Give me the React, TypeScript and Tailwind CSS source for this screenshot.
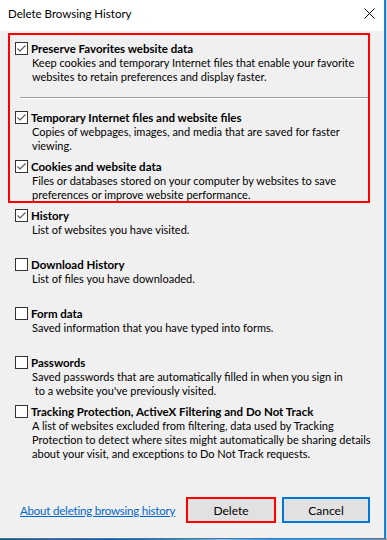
import React from "react";

const font = "font-['Lato','Liberation_Sans',sans-serif]";

function Box({ checked }: { checked: boolean }) {
  return (
    <div className="w-[13px] h-[13px] border border-[#333333] bg-white shrink-0 mt-[1px]">
      {checked && (
        <svg width="11" height="11" viewBox="0 0 11 11" className="block">
          <polyline
            points="1.5,5.5 4,8 9.5,2.5"
            fill="none"
            stroke="#555555"
            strokeWidth="1.1"
          />
        </svg>
      )}
    </div>
  );
}

function Item({
  checked,
  title,
  lines,
  className = "",
}: {
  checked: boolean;
  title: string;
  lines: string[];
  className?: string;
}) {
  return (
    <div className={`flex ${className}`}>
      <Box checked={checked} />
      <div className="ml-[3px] flex flex-col">
        <div className="font-bold leading-[15px] whitespace-nowrap text-[11.5px]">{title}</div>
        <div className="pl-[1px] flex flex-col text-[11px]">
          {lines.map((l, i) => (
            <div key={i} className="leading-[14px] whitespace-nowrap">
              {l}
            </div>
          ))}
        </div>
      </div>
    </div>
  );
}

export default function App() {
  return (
    <div className={`w-[387px] h-[540px] bg-[#cfcfcf] flex flex-col ${font} text-[11.5px] text-black`}>
      <div className="w-[386px] h-[539px] border-r-2 border-b border-[#1883d7] flex flex-col bg-[#f0f0f0] overflow-hidden">
        {/* title bar */}
        <div className="h-[31px] bg-white flex items-start justify-between pl-[8px] pr-[8px] pt-[6px] shrink-0">
          <div className="leading-[15px] text-[11.5px]">Delete Browsing History</div>
          <svg width="11" height="11" viewBox="0 0 11 11" className="mt-[2px] mr-[1px]">
            <path d="M0.5 0.5 L10.5 10.5 M10.5 0.5 L0.5 10.5" stroke="#000" strokeWidth="1" fill="none" />
          </svg>
        </div>

        {/* content */}
        <div className="flex flex-col flex-1">
          <div className="mt-[2px] ml-[8px] w-[362px] h-[170px] border-2 border-[#ff0000] pl-[5px] pt-[6px] flex flex-col">
            <Item
              checked
              title="Preserve Favorites website data"
              lines={[
                "Keep cookies and temporary Internet files that enable your favorite",
                "websites to retain preferences and display faster.",
              ]}
            />
            <div className="mt-[13px] ml-[5px] mr-0 flex flex-col">
              <div className="h-[1px] bg-[#a0a0a0]" />
              <div className="h-[1px] bg-white" />
            </div>
            <Item
              checked
              className="mt-[11px]"
              title="Temporary Internet files and website files"
              lines={["Copies of webpages, images, and media that are saved for faster", "viewing."]}
            />
            <Item
              checked
              className="mt-[6px]"
              title="Cookies and website data"
              lines={[
                "Files or databases stored on your computer by websites to save",
                "preferences or improve website performance.",
              ]}
            />
          </div>

          <div className="pl-[15px] mt-[5px] flex flex-col">
            <Item checked className="h-[49px]" title="History" lines={["List of websites you have visited."]} />
            <Item
              checked={false}
              className="h-[49px]"
              title="Download History"
              lines={["List of files you have downloaded."]}
            />
            <Item
              checked={false}
              className="h-[49px]"
              title="Form data"
              lines={["Saved information that you have typed into forms."]}
            />
            <Item
              checked={false}
              className="h-[49px]"
              title="Passwords"
              lines={[
                "Saved passwords that are automatically filled in when you sign in",
                "\u00a0to a website you've previously visited.",
              ]}
            />
            <Item
              checked={false}
              title="Tracking Protection, ActiveX Filtering and Do Not Track"
              lines={[
                "A list of websites excluded from filtering, data used by Tracking",
                "Protection to detect where sites might automatically be sharing details",
                "about your visit, and exceptions to Do Not Track requests.",
              ]}
            />
          </div>

          <div className="mt-[36px] flex items-center pl-[20px] pr-[14px]">
            <a href="#" className="text-[#0066cc] underline leading-[15px] whitespace-nowrap tracking-[-0.2px]">
              About deleting browsing history
            </a>
            <div className="ml-auto flex gap-[6px] shrink-0">
              <button className="w-[90px] h-[26px] border-2 border-[#ff0000] bg-[#e1e1e1] flex items-center justify-center leading-[15px] text-[12px]">
                Delete
              </button>
              <button className="w-[88px] h-[26px] border-2 border-[#0078d7] bg-[#e1e1e1] flex items-center justify-center leading-[15px] text-[12px]">
                Cancel
              </button>
            </div>
          </div>
        </div>
      </div>
      <div className="h-[1px] w-[387px] bg-[linear-gradient(90deg,#3a4a3a,#6a5060,#3a4a78,#607070,#b0b0b0,#4a90c8,#5aa0d0,#c08060)]" />
    </div>
  );
}
